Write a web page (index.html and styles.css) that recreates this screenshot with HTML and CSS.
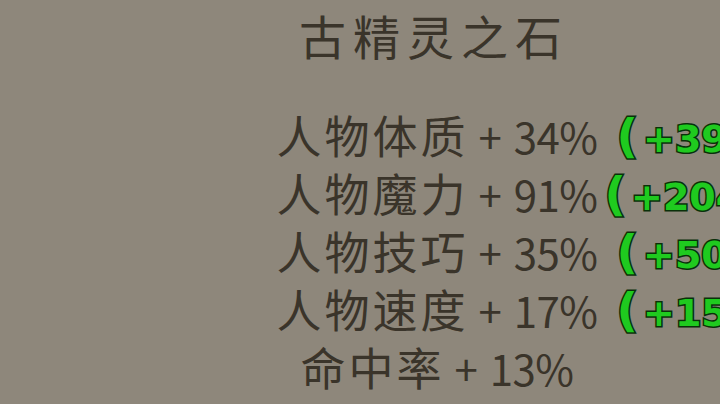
FILE: index.html
```html
<!DOCTYPE html>
<html lang="zh">
<head>
<meta charset="utf-8">
<link rel="stylesheet" href="styles.css">
</head>
<body>
<div class="panel">
  <div class="title">古精灵之石</div>
  <div class="stats">
    <div class="row"><span class="cjk">人物体质</span><span class="plus">+</span><span class="num">34%</span><span class="bonus"><span class="paren">(</span>+39)</span></div>
    <div class="row"><span class="cjk">人物魔力</span><span class="plus">+</span><span class="num">91%</span><span class="bonus tight"><span class="paren">(</span>+204)</span></div>
    <div class="row"><span class="cjk">人物技巧</span><span class="plus">+</span><span class="num">35%</span><span class="bonus"><span class="paren">(</span>+50)</span></div>
    <div class="row"><span class="cjk">人物速度</span><span class="plus">+</span><span class="num">17%</span><span class="bonus"><span class="paren">(</span>+15)</span></div>
    <div class="row"><span class="cjk">命中率</span><span class="plus">+</span><span class="num">13%</span></div>
  </div>
</div>
</body>
</html>
```
FILE: styles.css
```css
html, body {
  margin: 0;
  padding: 0;
}
body {
  width: 720px;
  height: 404px;
  overflow: hidden;
  background: #8e877b;
  font-family: "Noto Sans CJK SC", "Noto Sans", sans-serif;
  color: #3a342a;
}
.panel {
  margin-left: 152px;
  width: 568px;
  display: flex;
  flex-direction: column;
  align-items: center;
}
.title {
  padding-top: 2px;
  height: 66px;
  line-height: 66px;
  font-size: 47px;
  letter-spacing: 7px;
  margin-right: 4px;
}
.stats {
  margin-top: 39px;
  margin-left: 2px;
  display: flex;
  flex-direction: column;
  align-items: center;
}
.row {
  height: 58px;
  line-height: 58px;
  font-size: 42px;
  white-space: nowrap;
}
.cjk {
  font-size: 45px;
  line-height: 1;
  letter-spacing: 3px;
}
.plus {
  margin-left: 10px;
  margin-right: 12px;
}
.num {
  letter-spacing: -0.5px;
}
.bonus {
  display: inline-block;
  width: 0;
  overflow: visible;
  white-space: nowrap;
  vertical-align: top;
  text-indent: 19px;
  font-family: "DejaVu Sans", sans-serif;
  font-weight: bold;
  font-size: 38px;
  color: #1fca1f;
  -webkit-text-stroke: 3px #0a300a;
  paint-order: stroke fill;
}
.bonus.tight {
  text-indent: 7px;
}
.paren {
  font-size: 47px;
  margin-right: 5px;
}
```
